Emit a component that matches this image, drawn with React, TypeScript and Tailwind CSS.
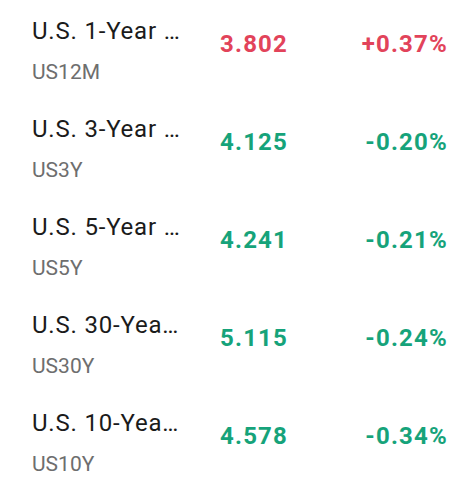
const rows = [
  { name: "U.S. 1-Year …", code: "US12M", price: "3.802", change: "+0.37%", up: true },
  { name: "U.S. 3-Year …", code: "US3Y", price: "4.125", change: "-0.20%", up: false },
  { name: "U.S. 5-Year …", code: "US5Y", price: "4.241", change: "-0.21%", up: false },
  { name: "U.S. 30-Yea…", code: "US30Y", price: "5.115", change: "-0.24%", up: false },
  { name: "U.S. 10-Yea…", code: "US10Y", price: "4.578", change: "-0.34%", up: false },
]

export default function App() {
  return (
    <div className="w-[474px] h-[494px] bg-white font-['Roboto',sans-serif] overflow-hidden">
      {rows.map((r) => (
        <div key={r.code} className="flex items-start h-[98px] pt-[16px]">
          <div className="w-[220px] pl-[32px] flex flex-col">
            <span className="text-[24px] leading-[30px] tracking-[0.8px] text-[#1b1b1b] whitespace-nowrap">
              {r.name}
            </span>
            <span className="mt-[12px] text-[21px] leading-[28px] text-[#6e6e6e]">{r.code}</span>
          </div>
          <div
            className={`w-[100px] mt-[12px] text-[24px] leading-[32px] tracking-[1.2px] font-bold ${
              r.up ? "text-[#e2435a]" : "text-[#16a37a]"
            }`}
          >
            {r.price}
          </div>
          <div
            className={`flex-1 pr-[26px] mt-[12px] text-right text-[24px] leading-[32px] tracking-[1.2px] font-bold ${
              r.up ? "text-[#e2435a]" : "text-[#16a37a]"
            }`}
          >
            {r.change}
          </div>
        </div>
      ))}
    </div>
  )
}
